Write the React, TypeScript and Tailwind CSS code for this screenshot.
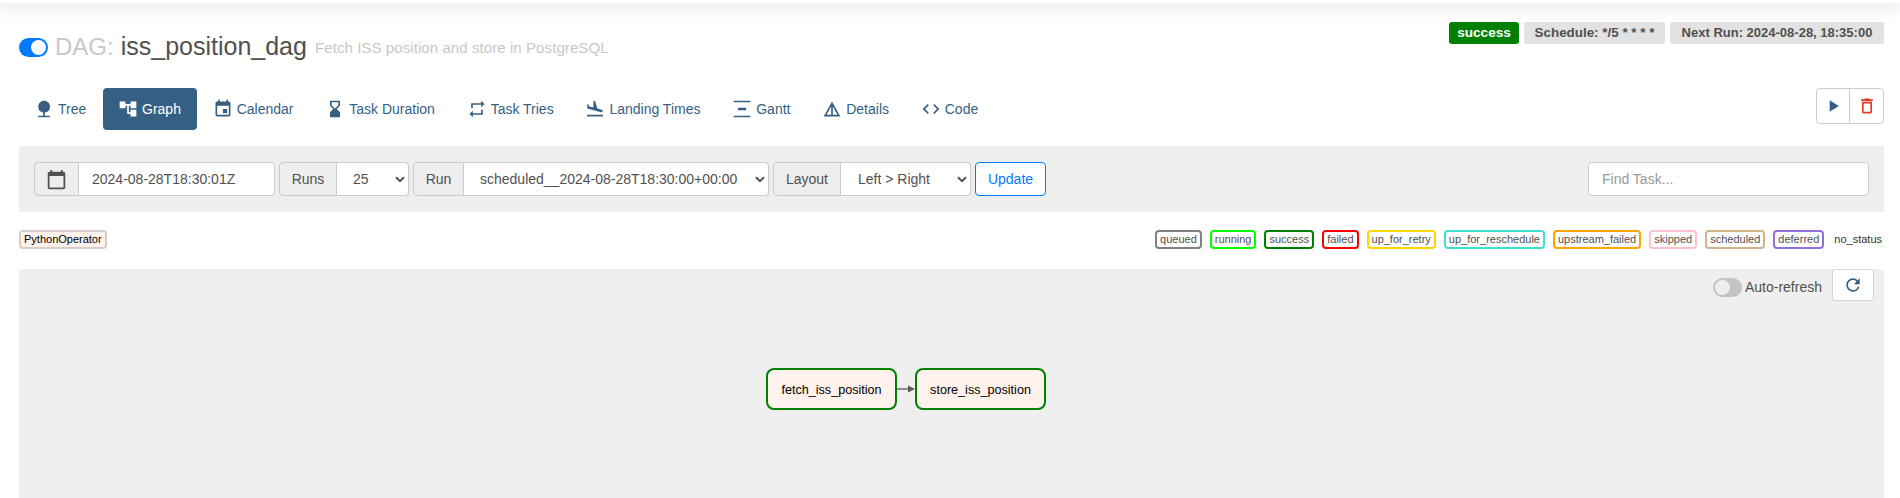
import React from 'react';
import {
  MdNature,
  MdAccountTree,
  MdEvent,
  MdHourglassBottom,
  MdRepeat,
  MdFlightLand,
  MdVerticalDistribute,
  MdDetails,
  MdCode,
  MdPlayArrow,
  MdDeleteOutline,
  MdRefresh,
  MdCalendarToday,
} from 'react-icons/md';

const tabs = [
  { label: 'Tree', icon: MdNature },
  { label: 'Graph', icon: MdAccountTree, active: true },
  { label: 'Calendar', icon: MdEvent },
  { label: 'Task Duration', icon: MdHourglassBottom },
  { label: 'Task Tries', icon: MdRepeat },
  { label: 'Landing Times', icon: MdFlightLand },
  { label: 'Gantt', icon: MdVerticalDistribute },
  { label: 'Details', icon: MdDetails },
  { label: 'Code', icon: MdCode },
];

const states = [
  { label: 'queued', border: 'border-[#808080]' },
  { label: 'running', border: 'border-[#00ff00]' },
  { label: 'success', border: 'border-[#008000]' },
  { label: 'failed', border: 'border-[#ff0000]' },
  { label: 'up_for_retry', border: 'border-[#ffd700]' },
  { label: 'up_for_reschedule', border: 'border-[#40e0d0]' },
  { label: 'upstream_failed', border: 'border-[#ffa500]' },
  { label: 'skipped', border: 'border-[#ffc0cb]' },
  { label: 'scheduled', border: 'border-[#d2b48c]' },
  { label: 'deferred', border: 'border-[#9370db]' },
];

function Chevron() {
  return (
    <svg className="absolute right-[4px] top-[14px] pointer-events-none" width="10" height="7" viewBox="0 0 10 7">
      <path d="M1 1.2 L5 5.2 L9 1.2" fill="none" stroke="#51504f" strokeWidth="2" />
    </svg>
  );
}

function Addon({ children, className = '' }: { children: React.ReactNode; className?: string }) {
  return (
    <span className={`h-[34px] flex items-center justify-center bg-[#eeeeee] border border-[#cbcbcb] rounded-l-[4px] text-[14px] text-[#51504f] ${className}`}>
      {children}
    </span>
  );
}

function SelectGroup({ label, value, labelW, selectW, pl }: { label: string; value: string; labelW: string; selectW: string; pl: string }) {
  return (
    <div className="flex">
      <Addon className={labelW}>{label}</Addon>
      <div className={`relative ${selectW}`}>
        <select
          defaultValue={value}
          className={`appearance-none w-full h-[34px] bg-white border border-l-0 border-[#cbcbcb] rounded-r-[4px] text-[14px] text-[#51504f] outline-none ${pl}`}
        >
          <option>{value}</option>
        </select>
        <Chevron />
      </div>
    </div>
  );
}

function TaskNode({ name }: { name: string }) {
  return (
    <div className="w-[131px] h-[42px] pt-[2px] flex items-center justify-center bg-[#fff2ec] border-[2px] border-[#008000] rounded-[8px] text-[12.6px] text-black">
      {name}
    </div>
  );
}

export default function App() {
  return (
    <div className="w-[1900px] h-[498px] overflow-hidden bg-white font-['Liberation_Sans',Arial,sans-serif] text-[14px] text-[#51504f]">
      <div className="h-[3px] bg-white shadow-[0_3px_14px_rgba(0,0,0,0.3)]" />

      <div className="pl-[19px] pr-[16px]">
        {/* Title row */}
        <div className="flex justify-between h-[85px]">
          <div className="flex items-center h-[40px] mt-[24px]">
            <span className="w-[29px] h-[19px] rounded-full bg-[#007bff] flex items-center justify-end pr-[2px]">
              <span className="w-[15px] h-[15px] rounded-full bg-white" />
            </span>
            <span className="ml-[7px] text-[24px] text-[#c8c8c8]">DAG:</span>
            <span className="ml-[7px] text-[25px] text-[#51504f]">iss_position_dag</span>
            <span className="ml-[8px] mt-[3px] text-[15.2px] text-[#c8c8c8]">Fetch ISS position and store in PostgreSQL</span>
          </div>
          <div className="flex items-start gap-[5px] pt-[19px] font-bold">
            <span className="w-[70px] h-[22px] flex items-center justify-center rounded-[3px] bg-[#008000] text-white text-[13.6px]">success</span>
            <span className="w-[141px] h-[22px] flex items-center justify-center rounded-[3px] bg-[#e2e2e2] text-[13.4px]">Schedule: */5 * * * *</span>
            <span className="w-[214px] h-[22px] flex items-center justify-center rounded-[3px] bg-[#e2e2e2] text-[13px]">Next Run: 2024-08-28, 18:35:00</span>
          </div>
        </div>

        {/* Tabs */}
        <div className="flex justify-between h-[42px]">
          <nav className="flex text-[14px] text-[#365f84]">
            {tabs.map((t) => (
              <a
                key={t.label}
                className={`h-[42px] flex items-center gap-[4px] pl-[15px] pr-[16px] mr-[0.75px] rounded-[4px] ${t.active ? 'bg-[#365f84] text-white' : ''}`}
              >
                <t.icon size={20} />
                <span>{t.label}</span>
              </a>
            ))}
          </nav>
          <div className="flex self-start h-[36px] border border-[#cbcbcb] rounded-[4px]">
            <button className="w-[33px] flex items-center justify-center border-r border-[#cbcbcb] text-[#365f84]">
              <MdPlayArrow size={20} />
            </button>
            <button className="w-[33px] flex items-center justify-center text-[#e43921]">
              <MdDeleteOutline size={20} />
            </button>
          </div>
        </div>

        {/* Filter bar */}
        <div className="mt-[16px] h-[66px] bg-[#eeeeee] flex items-center justify-between px-[15px]">
          <div className="flex items-center gap-[4px]">
            <div className="flex">
              <Addon className="w-[45px]">
                <MdCalendarToday size={21} />
              </Addon>
              <input
                readOnly
                value="2024-08-28T18:30:01Z"
                className="w-[196px] h-[34px] pl-[13px] bg-white border border-l-0 border-[#cbcbcb] rounded-r-[4px] text-[14px] text-[#51504f] outline-none"
              />
            </div>
            <SelectGroup label="Runs" value="25" labelW="w-[58px]" selectW="w-[72px]" pl="pl-[16px]" />
            <SelectGroup label="Run" value="scheduled__2024-08-28T18:30:00+00:00" labelW="w-[51px]" selectW="w-[305px]" pl="pl-[16px]" />
            <SelectGroup label="Layout" value="Left > Right" labelW="w-[68px]" selectW="w-[130px]" pl="pl-[17px]" />
            <button className="h-[34px] w-[71px] bg-white border border-[#007bff] rounded-[4px] text-[14px] text-[#007bff]">Update</button>
          </div>
          <input
            placeholder="Find Task..."
            className="w-[281px] h-[34px] px-[13px] bg-white border border-[#cbcbcb] rounded-[4px] text-[14px] outline-none placeholder:text-[#999999]"
          />
        </div>

        {/* Legend */}
        <div className="h-[57px] pb-[2px] flex items-center justify-between text-[11px]">
          <span className="h-[19px] flex items-center px-[3px] bg-[#fff2ec] border-[2px] border-[#d9cbc6] rounded-[4px] text-black">PythonOperator</span>
          <div className="flex items-center gap-[8px] pr-[2px] text-[#51504f]">
            {states.map((s) => (
              <span key={s.label} className={`h-[19px] flex items-center px-[3px] bg-white border-[2px] rounded-[4px] ${s.border}`}>
                {s.label}
              </span>
            ))}
            <span className="ml-[2px] text-[#333333]">no_status</span>
          </div>
        </div>

        {/* Graph panel */}
        <div className="relative h-[229px] bg-[#efefef] rounded-t-[4px]">
          <div className="absolute right-[10px] top-0 flex items-start gap-[10px]">
            <div className="flex items-center gap-[3px] mt-[8px]">
              <span className="w-[29px] h-[19px] rounded-full bg-[#c4c4c4] flex items-center pl-[2px]">
                <span className="w-[15px] h-[15px] rounded-full bg-[#eeeeee]" />
              </span>
              <span className="text-[14px]">Auto-refresh</span>
            </div>
            <button className="w-[42px] h-[32px] bg-white border border-[#d4d4d4] rounded-[3px] flex items-center justify-center text-[#365f84]">
              <MdRefresh size={20} />
            </button>
          </div>
          <div className="flex items-center pt-[99px] pl-[747px]">
            <TaskNode name="fetch_iss_position" />
            <svg width="18" height="12" viewBox="0 0 18 12" className="block">
              <path d="M0 6 H12" stroke="#6b6b6b" strokeWidth="1.5" />
              <path d="M11 2.5 L18 6 L11 9.5 Z" fill="#5a5a5a" />
            </svg>
            <TaskNode name="store_iss_position" />
          </div>
        </div>
      </div>
    </div>
  );
}
